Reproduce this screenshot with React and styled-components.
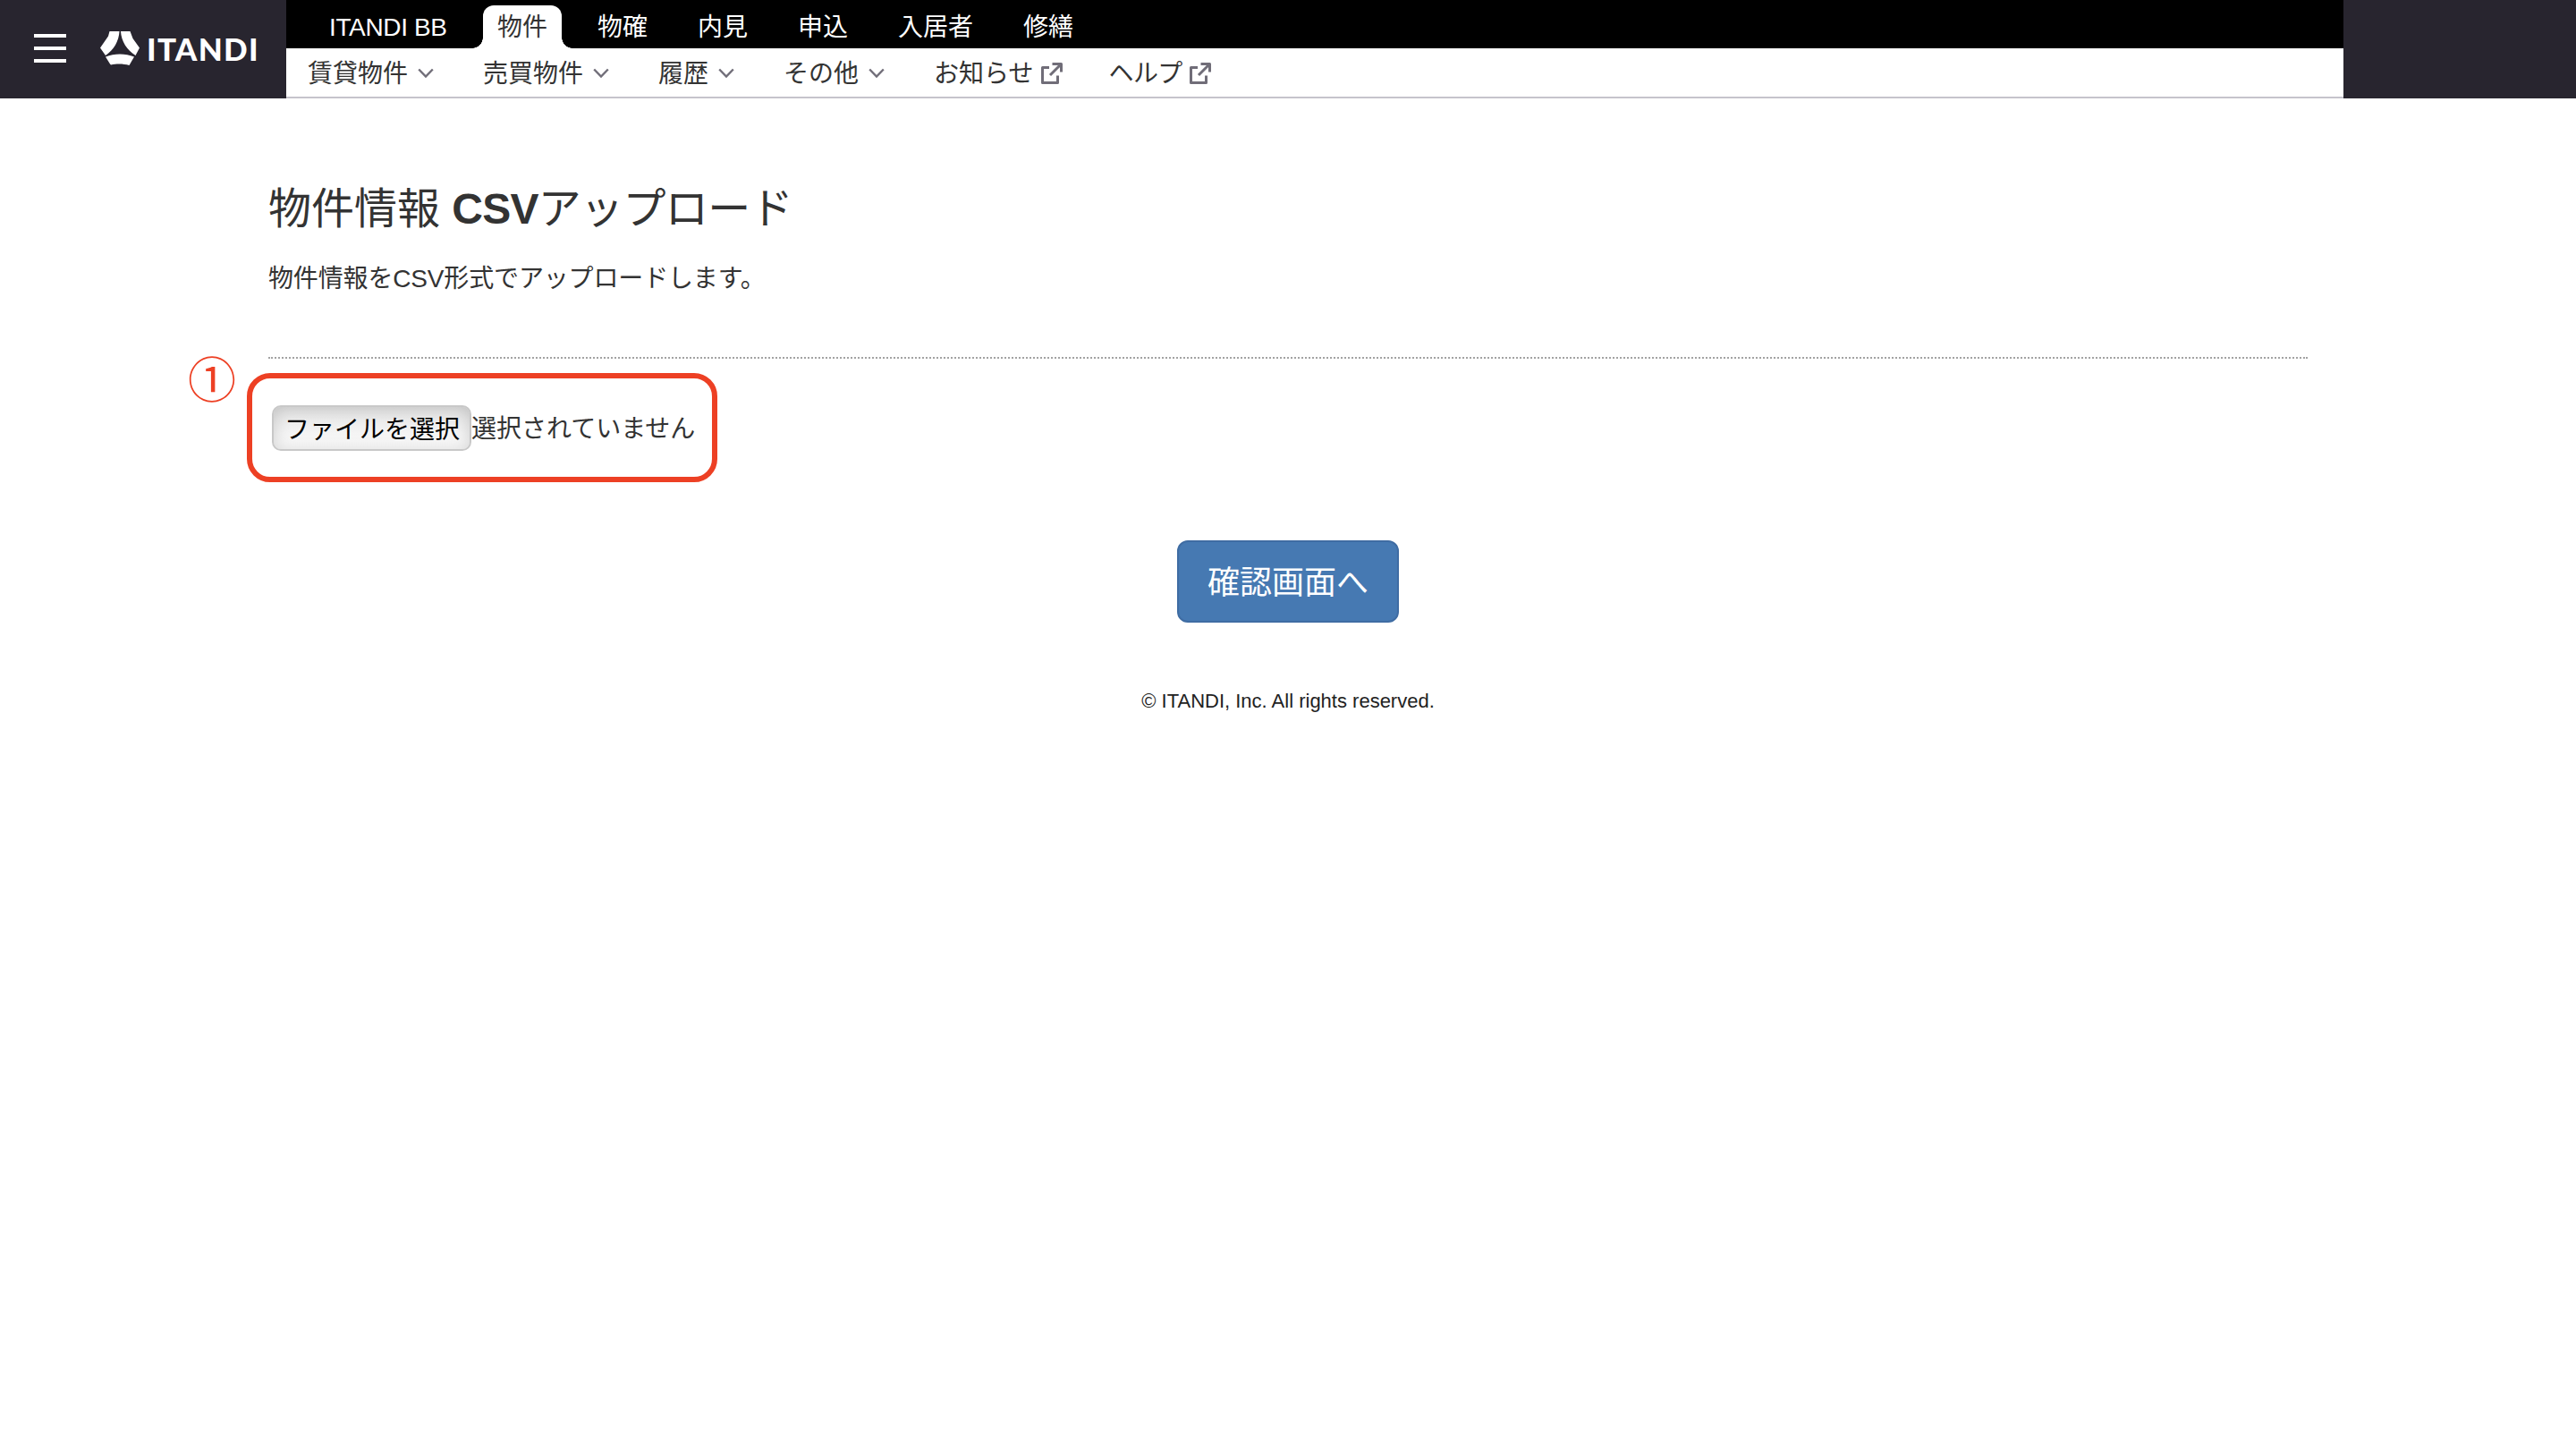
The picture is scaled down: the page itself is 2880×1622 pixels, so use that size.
import React from "react";
import styled, { createGlobalStyle } from "styled-components";

const mainMenu = [
  { label: "ITANDI BB", spacing: "-0.35px" },
  { label: "物件", active: true },
  { label: "物確" },
  { label: "内見" },
  { label: "申込" },
  { label: "入居者" },
  { label: "修繕" },
];

const subMenu = [
  { label: "賃貸物件" },
  { label: "売買物件" },
  { label: "履歴" },
  { label: "その他" },
  { label: "お知らせ", external: true },
  { label: "ヘルプ", external: true, spacing: "-0.6px" },
];

const Chevron = () => (
  <svg width="18" height="12" viewBox="0 0 18 12" fill="none">
    <path d="M1.2 1.5L9 9.5L16.8 1.5" stroke="#706d78" strokeWidth="2.4" />
  </svg>
);

const External = () => (
  <svg width="24" height="24" viewBox="0 0 24 24" fill="none">
    <path
      d="M9 5.4H1.5V22.5H18.5V14.5M12.5 1.5H22.5V10.5M22 2L10 14"
      stroke="#706d78"
      strokeWidth="3"
      strokeLinejoin="round"
    />
  </svg>
);

const LogoMark = () => (
  <svg width="44" height="38" viewBox="0 0 44 38" fill="#fff">
    <path d="M10.5 0H21.5C21 11 15 21 6 27L0 18.5L9 5.5Z" />
    <path d="M23 0H33.5L36.5 8L44 18.5L39.5 27C30 21 23.5 11 23 0Z" />
    <path d="M6 28.5C16 24.5 28 24.5 38 28.5L32.5 38C26 36 18 36 12 37.5L11 36.5Z" />
  </svg>
);

const App = () => {
  return (
    <>
      <GlobalStyle />
      <Header>
        <Brand>
          <Hamburger>
            <span />
            <span />
            <span />
          </Hamburger>
          <LogoMark />
          <LogoText>ITANDI</LogoText>
        </Brand>
        <Navigation>
          <MainNav>
            {mainMenu.map((item) => (
              <MainItem
                key={item.label}
                $active={item.active}
                $spacing={item.spacing}
              >
                {item.label}
              </MainItem>
            ))}
          </MainNav>
          <SubNav>
            {subMenu.map((item) => (
              <SubItem key={item.label} $spacing={item.spacing}>
                {item.label}
                <IconSlot>
                  {item.external ? <External /> : <Chevron />}
                </IconSlot>
              </SubItem>
            ))}
          </SubNav>
        </Navigation>
      </Header>
      <Main>
        <Title>
          物件情報 <b>CSV</b>
          <span>アップロード</span>
        </Title>
        <Description>物件情報をCSV形式でアップロードします。</Description>
        <UploadArea>
          <StepNumber>①</StepNumber>
          <UploadFrame>
            <FileButton>ファイルを選択</FileButton>
            <FileStatus>選択されていません</FileStatus>
          </UploadFrame>
        </UploadArea>
        <ConfirmButton>確認画面へ</ConfirmButton>
      </Main>
      <Footer>© ITANDI, Inc. All rights reserved.</Footer>
    </>
  );
};

const GlobalStyle = createGlobalStyle`
  * {
    box-sizing: border-box;
  }
  body {
    margin: 0;
    background: #fff;
    color: #333;
    font-family: "Liberation Sans", "Noto Sans CJK JP", sans-serif;
    font-size: 28px;
    line-height: 40px;
  }
  button {
    font-family: inherit;
  }
`;

const Header = styled.header`
  display: flex;
  height: 110px;
  padding-right: 260px;
  background: #28252f;
`;

const Brand = styled.div`
  display: flex;
  width: 320px;
  padding: 35px 0 0 38px;
  svg {
    margin-left: 38px;
  }
`;

const Hamburger = styled.div`
  display: flex;
  flex-direction: column;
  gap: 10px;
  width: 36px;
  padding-top: 3px;
  span {
    height: 4px;
    background: #fff;
  }
`;

const LogoText = styled.div`
  margin: -1px 0 0 8px;
  color: #fff;
  font-family: Lato, sans-serif;
  font-size: 35px;
  font-weight: 900;
  letter-spacing: 1.3px;
`;

const Navigation = styled.nav`
  flex: 1;
`;

const MainNav = styled.div`
  display: flex;
  align-items: flex-end;
  gap: 24px;
  height: 54px;
  padding-left: 32px;
  background: #000;
`;

const MainItem = styled.div`
  position: relative;
  height: 48px;
  padding: 5px 16px 3px;
  border-radius: 12px 12px 0 0;
  background: ${(props) => (props.$active ? "#fff" : "#000")};
  color: ${(props) => (props.$active ? "#333" : "#fff")};
  letter-spacing: ${(props) => props.$spacing || "normal"};
  white-space: nowrap;
  /* the curved feet of the open tab */
  &::before,
  &::after {
    content: "";
    display: ${(props) => (props.$active ? "block" : "none")};
    position: absolute;
    bottom: 0;
    width: 12px;
    height: 12px;
  }
  &::before {
    left: -12px;
    background: radial-gradient(circle at 0 0, #000 11.5px, #fff 12px);
  }
  &::after {
    right: -12px;
    background: radial-gradient(circle at 100% 0, #000 11.5px, #fff 12px);
  }
  &:first-child {
    width: 164px;
  }
`;

const SubNav = styled.div`
  display: flex;
  gap: 44px;
  height: 56px;
  padding: 9px 0 0 24px;
  border-bottom: 2px solid #c6c4cc;
  background: #fff;
`;

const SubItem = styled.div`
  display: flex;
  letter-spacing: ${(props) => props.$spacing || "normal"};
  white-space: nowrap;
`;

const IconSlot = styled.span`
  display: flex;
  align-items: center;
  justify-content: center;
  width: 40px;
  height: 38px;
`;

const Main = styled.main`
  display: flex;
  flex-direction: column;
  align-items: center;
  width: 2280px;
  margin: 0 auto;
  padding-top: 94px;
`;

const Title = styled.h1`
  align-self: flex-start;
  margin: 0;
  font-size: 48px;
  font-weight: 400;
  line-height: 60px;
  b {
    letter-spacing: -0.8px;
  }
  span {
    letter-spacing: -0.6px;
  }
`;

const Description = styled.p`
  align-self: flex-start;
  margin: 28px 0 67px;
  letter-spacing: -0.15px;
`;

const UploadArea = styled.section`
  position: relative;
  width: 100%;
  height: 205px;
  padding-top: 16px;
  border-top: 2px dotted #a3a3a3;
`;

const StepNumber = styled.span`
  position: absolute;
  top: -2px;
  left: -90px;
  color: #ed4024;
  font-size: 54px;
  line-height: 54px;
`;

const UploadFrame = styled.div`
  display: flex;
  align-items: center;
  width: 526px;
  height: 122px;
  margin-left: -24px;
  padding-left: 22px;
  border: 6px solid #ed4024;
  border-radius: 26px;
`;

const FileButton = styled.button`
  width: 223px;
  height: 51px;
  padding: 0 0 0 1px;
  border: 2px solid #c8c8c8;
  border-radius: 10px;
  background: linear-gradient(#e2e2e2, #fff);
  box-shadow: inset 0 0 18px rgba(0, 0, 0, 0.16);
  color: #000;
  font-size: 28px;
`;

const FileStatus = styled.span`
  padding-top: 3px;
`;

const ConfirmButton = styled.button`
  width: 248px;
  height: 92px;
  padding: 0 0 4px;
  border: 2px solid #3f6ca3;
  border-radius: 12px;
  background: #4679b2;
  color: #fff;
  font-size: 36px;
`;

const Footer = styled.footer`
  margin-top: 68px;
  color: #222;
  font-size: 22px;
  text-align: center;
`;

export default App;
